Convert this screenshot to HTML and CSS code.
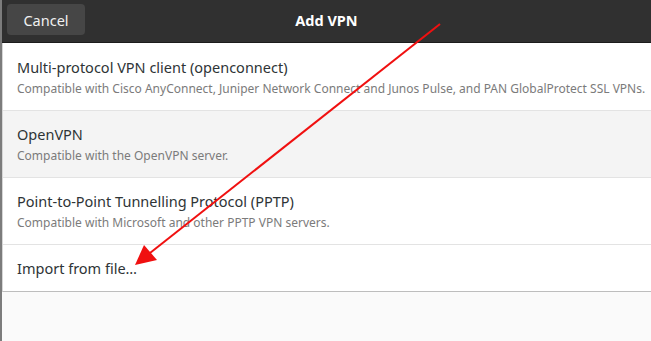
FILE: index.html
```html
<!DOCTYPE html>
<html lang="en">

<head>
    <meta charset="UTF-8">
    <meta name="viewport" content="width=device-width, initial-scale=1.0">
    <title>Add VPN</title>
    <link rel="stylesheet" href="styles.css">
</head>

<body>
    <div class="window">
        <div class="headerbar">
            <button class="cancel">Cancel</button>
            <div class="title">Add VPN</div>
        </div>
        <div class="content">
            <div class="list">
                <div class="row">
                    <div class="row-title">Multi-protocol VPN client (openconnect)</div>
                    <div class="row-sub">Compatible with Cisco AnyConnect, Juniper Network Connect and Junos Pulse, and PAN GlobalProtect SSL VPNs.</div>
                </div>
                <div class="row hover">
                    <div class="row-title">OpenVPN</div>
                    <div class="row-sub">Compatible with the OpenVPN server.</div>
                </div>
                <div class="row">
                    <div class="row-title">Point-to-Point Tunnelling Protocol (PPTP)</div>
                    <div class="row-sub">Compatible with Microsoft and other PPTP VPN servers.</div>
                </div>
                <div class="row single">
                    <div class="row-title">Import from file…</div>
                </div>
            </div>
        </div>
    </div>

    <svg class="annotation" width="651" height="341" viewBox="0 0 651 341">
        <line x1="440" y1="24" x2="150" y2="253" stroke="#f01010" stroke-width="2" />
        <polygon points="135,265 144,245 157,260" fill="#f01010" />
    </svg>
</body>

</html>
```

FILE: styles.css
```css
body {
    margin: 0;
    padding: 0;
    font-family: "Noto Sans", sans-serif;
    background-color: #fafafa;
}

.window {
    width: 651px;
    height: 341px;
    display: flex;
    flex-direction: column;
    border-left: 2px solid #7c7c7c;
    box-sizing: border-box;
}

.headerbar {
    height: 42px;
    flex-shrink: 0;
    background-color: #303030;
    border-bottom: 1px solid #1c1c1c;
    display: flex;
    align-items: center;
    padding-left: 5px;
    position: relative;
}

.cancel {
    height: 31px;
    width: 78px;
    margin-top: -3px;
    background-color: #464646;
    color: #f0f0f0;
    border: none;
    border-radius: 4px;
    font-family: "Noto Sans", sans-serif;
    font-size: 14.5px;
    padding: 0;
}

.title {
    position: absolute;
    left: 0;
    right: 0;
    top: 10px;
    text-align: center;
    color: #ffffff;
    font-weight: bold;
    font-size: 14.5px;
    pointer-events: none;
}

.content {
    flex: 1;
    background-color: #fafafa;
}

.list {
    background-color: #ffffff;
    border-left: 1px solid #d6d6d6;
    border-bottom: 1px solid #bdbdbd;
}

.row {
    height: 67px;
    padding-left: 14px;
    border-bottom: 1px solid #e3e3e3;
    display: flex;
    flex-direction: column;
    justify-content: center;
    box-sizing: border-box;
}

.row:first-child {
    height: 68px;
}

.row.hover {
    background-color: #f4f4f4;
}

.row.single {
    height: 46px;
    border-bottom: none;
}

.row-title {
    color: #2e3436;
    font-size: 14.5px;
    line-height: 20px;
}

.row-sub {
    color: #7b7b7b;
    font-size: 12px;
    line-height: 16px;
    margin-top: 4px;
    white-space: nowrap;
}

.annotation {
    position: absolute;
    left: 0;
    top: 0;
}
```
